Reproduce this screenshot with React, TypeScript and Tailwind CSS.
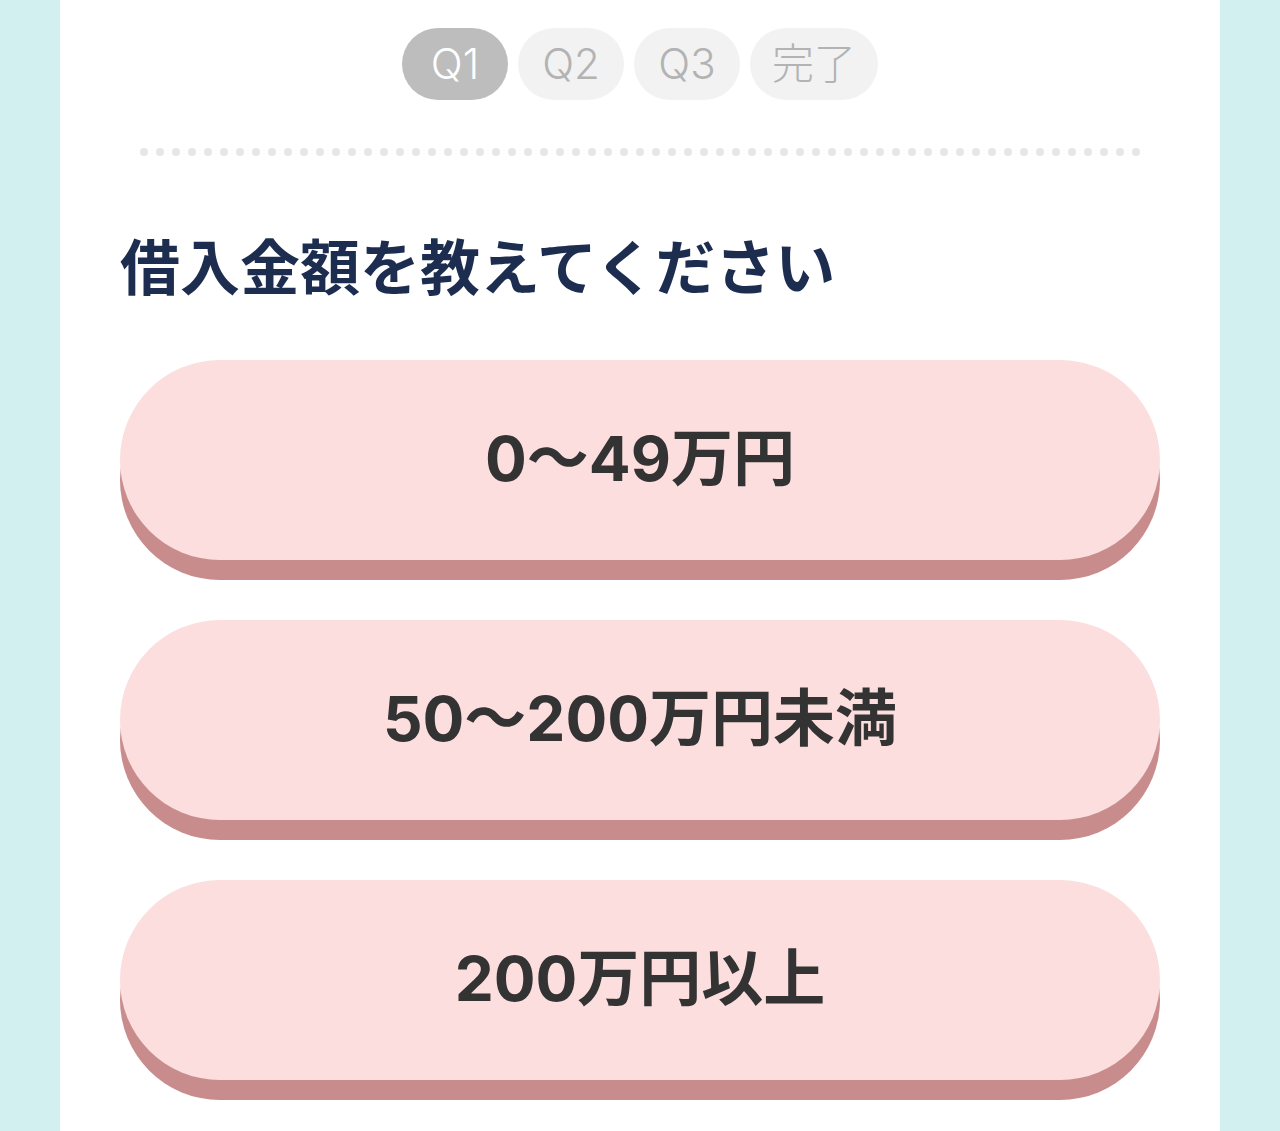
const steps = [
  { label: 'Q1', active: true, width: 'w-[106px]' },
  { label: 'Q2', active: false, width: 'w-[106px]' },
  { label: 'Q3', active: false, width: 'w-[106px]' },
  { label: '完了', active: false, width: 'w-[128px]' },
];

const answers = ['0〜49万円', '50〜200万円未満', '200万円以上'];

const dots = Array.from({ length: 63 }, (_, i) => i);

export default function App() {
  return (
    <div className="min-h-[1131px] bg-[#d3f0f0] font-['Noto_Sans_CJK_JP',sans-serif]">
      <div className="mx-auto min-h-[1131px] w-[1160px] bg-white px-[60px] pt-[28px]">
        {/* progress */}
        <div className="flex justify-center gap-[10px]">
          {steps.map((s) => (
            <div
              key={s.label}
              className={`flex h-[72px] ${s.width} items-center justify-center rounded-full pb-[2px] font-['Inter','Noto_Sans_CJK_JP',sans-serif] text-[42px] font-light ${
                s.active ? 'bg-[#bdbdbd] text-white' : 'bg-[#f2f2f2] text-[#b3b3b3]'
              }`}
            >
              {s.label}
            </div>
          ))}
        </div>

        {/* dotted divider */}
        <div className="mx-[20px] mt-[48px] flex h-[8px] justify-between">
          {dots.map((d) => (
            <span key={d} className="block h-[8px] w-[8px] rounded-full bg-[#e6e6e6]" />
          ))}
        </div>

        <h2 className="mt-[78px] text-[60px] leading-none font-bold text-[#1c2d50]">
          借入金額を教えてください
        </h2>

        <div className="mt-[66px] flex flex-col gap-[60px]">
          {answers.map((a) => (
            <button
              key={a}
              className="flex h-[200px] w-full items-center justify-center rounded-full bg-[#fcdede] pb-[4px] font-['Inter','Noto_Sans_CJK_JP',sans-serif] text-[62px] font-bold text-[#333333] shadow-[0_20px_0_#c98c8c]"
            >
              {a}
            </button>
          ))}
        </div>
      </div>
    </div>
  );
}
